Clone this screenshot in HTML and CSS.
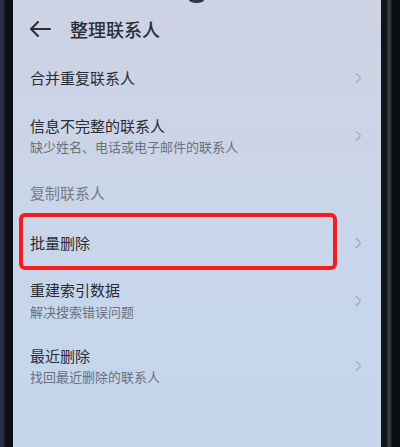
FILE: index.html
```html
<!DOCTYPE html>
<html lang="zh-CN">
<head>
<meta charset="utf-8">
<title>整理联系人</title>
<link rel="stylesheet" href="styles.css">
</head>
<body>
<div class="frame">
  <div class="bezel-left"></div>
  <div class="screen">
    <div class="camera"></div>
    <header class="header">
      <svg class="back" width="22" height="16" viewBox="0 0 22 16">
        <polyline points="8,1 1,8 8,15" fill="none" stroke="#2c2f37" stroke-width="2" stroke-linecap="round" stroke-linejoin="round"/>
        <line x1="1.5" y1="8" x2="20" y2="8" stroke="#2c2f37" stroke-width="2" stroke-linecap="round"/>
      </svg>
      <h1 class="title">整理联系人</h1>
    </header>

    <div class="row row-single">
      <div class="text"><div class="main">合并重复联系人</div></div>
      <svg class="chev" width="8" height="12" viewBox="0 0 8 12"><path d="M2,1.5 Q6.5,5 6.2,6 Q5.5,8 2,10.5" fill="none" stroke="#a6acb9" stroke-width="1.5" stroke-linecap="round"/></svg>
    </div>

    <div class="row row-double row-2">
      <div class="text">
        <div class="main">信息不完整的联系人</div>
        <div class="sub">缺少姓名、电话或电子邮件的联系人</div>
      </div>
      <svg class="chev" width="8" height="12" viewBox="0 0 8 12"><path d="M2,1.5 Q6.5,5 6.2,6 Q5.5,8 2,10.5" fill="none" stroke="#a6acb9" stroke-width="1.5" stroke-linecap="round"/></svg>
    </div>

    <div class="row row-tall">
      <div class="text"><div class="main disabled">复制联系人</div></div>
    </div>

    <div class="row row-tall highlighted">
      <div class="text"><div class="main">批量删除</div></div>
      <svg class="chev" width="8" height="12" viewBox="0 0 8 12"><path d="M2,1.5 Q6.5,5 6.2,6 Q5.5,8 2,10.5" fill="none" stroke="#a6acb9" stroke-width="1.5" stroke-linecap="round"/></svg>
      <div class="marker"></div>
    </div>

    <div class="row row-double row-5">
      <div class="text">
        <div class="main">重建索引数据</div>
        <div class="sub">解决搜索错误问题</div>
      </div>
      <svg class="chev" width="8" height="12" viewBox="0 0 8 12"><path d="M2,1.5 Q6.5,5 6.2,6 Q5.5,8 2,10.5" fill="none" stroke="#a6acb9" stroke-width="1.5" stroke-linecap="round"/></svg>
    </div>

    <div class="row row-double row-6">
      <div class="text">
        <div class="main">最近删除</div>
        <div class="sub">找回最近删除的联系人</div>
      </div>
      <svg class="chev" width="8" height="12" viewBox="0 0 8 12"><path d="M2,1.5 Q6.5,5 6.2,6 Q5.5,8 2,10.5" fill="none" stroke="#a6acb9" stroke-width="1.5" stroke-linecap="round"/></svg>
    </div>
  </div>
  <div class="bezel-right"></div>
</div>
</body>
</html>
```

FILE: styles.css
```css
html, body {
  margin: 0;
  padding: 0;
  height: 100%;
}

body {
  font-family: "Noto Sans CJK SC", "Noto Sans", sans-serif;
  background: #0d0e12;
  overflow: hidden;
}

.frame {
  display: flex;
  height: 447px;
  width: 400px;
}

.bezel-left {
  width: 13px;
  flex: none;
  background: linear-gradient(to right, #2c3252 0, #252a44 4px, #0f1015 5px, #0c0d11 13px);
}

.bezel-right {
  width: 19px;
  flex: none;
  background: linear-gradient(to right, #101218 0, #14161c 6px, #3b4049 7px, #2c3038 10px, #0b0c0f 11px, #0b0c0f 19px);
}

.screen {
  flex: 1;
  position: relative;
  background: linear-gradient(to bottom, #cdd2e4 0%, #cbd5e8 40%, #c6d6ec 75%, #c5d6ec 100%);
  display: flex;
  flex-direction: column;
  color: #2a2d35;
}

.camera {
  position: absolute;
  top: -3px;
  left: 176px;
  width: 15px;
  height: 6px;
  border-radius: 50%;
  background: #30344a;
}

.header {
  height: 58px;
  display: flex;
  align-items: center;
  padding-left: 17px;
  box-sizing: border-box;
}

.back {
  display: block;
  margin-right: 18px;
}

.title {
  margin: 0;
  font-size: 18px;
  font-weight: 500;
  line-height: 22px;
  color: #2b2e36;
}

.row {
  position: relative;
  display: flex;
  align-items: center;
  justify-content: space-between;
  padding-left: 17px;
  padding-right: 19px;
  box-sizing: border-box;
}

.row-single {
  height: 40px;
}

.row-tall {
  height: 50px;
}

.row-2 {
  padding-top: 18px;
  padding-bottom: 12px;
}

.row-5 {
  padding-top: 12px;
  padding-bottom: 14px;
}

.row-6 {
  padding-top: 11px;
  padding-bottom: 10px;
}

.main {
  font-size: 15px;
  line-height: 20px;
  color: #2a2d35;
}

.main.disabled {
  color: #767b87;
}

.sub {
  margin-top: 2px;
  font-size: 13px;
  line-height: 18px;
  color: #6b707c;
}

.row-5 .sub {
  margin-top: 3px;
}

.chev {
  display: block;
  flex: none;
}

.marker {
  position: absolute;
  top: -5px;
  left: 6px;
  width: 318px;
  height: 57px;
  box-sizing: border-box;
  border: 4px solid #f41c1c;
  border-radius: 6px;
  pointer-events: none;
}
```
